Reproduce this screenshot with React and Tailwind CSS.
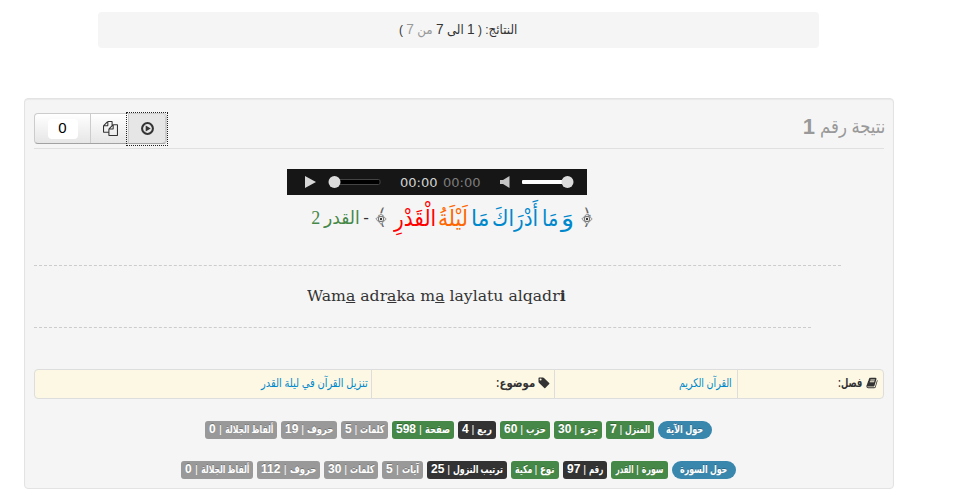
import { useLayoutEffect, useRef, useState } from "react";

// Squeezes a line of text horizontally so that it fills its box.
function Fit({ className = "", origin = "origin-right", children }) {
  const box = useRef(null);
  const text = useRef(null);
  const [scale, setScale] = useState(1);
  useLayoutEffect(() => {
    const w = text.current.offsetWidth;
    if (w) setScale(box.current.offsetWidth / w);
  }, []);
  return (
    <span ref={box} className={`inline-flex shrink-0 whitespace-nowrap ${className}`}>
      <span
        ref={text}
        className={`block shrink-0 ${origin}`}
        style={{ transform: `scaleX(${scale})` }}
      >
        {children}
      </span>
    </span>
  );
}

const GREEN = "bg-[#468847]";
const DARK = "bg-[#333333]";
const GRAY = "bg-[#999999]";

const ayaTags = [
  ["المنزل", "7", GREEN, "w-12", "w-[25px]"],
  ["جزء", "30", GREEN, "w-12", "w-[18px]"],
  ["حزب", "60", GREEN, "w-[50px]", "w-5"],
  ["ربع", "4", DARK, "w-[38px]", "w-[15px]"],
  ["صفحة", "598", GREEN, "w-[62px]", "w-[25px]"],
  ["كلمات", "5", GRAY, "w-[47px]", "w-6"],
  ["حروف", "19", GRAY, "w-14", "w-[26px]"],
  ["ألفاظ الجلالة", "0", GRAY, "w-[72px]", "w-12"],
];

const suraTags = [
  ["سورة", "القدر", GREEN, "w-[57px]", "w-[22px]", "w-[18px]"],
  ["رقم", "97", DARK, "w-11", "w-[14px]"],
  ["نوع", "مكية", GREEN, "w-12", "w-[15px]", "w-[17px]"],
  ["ترتيب النزول", "25", DARK, "w-20", "w-[50px]"],
  ["آيات", "5", GRAY, "w-[41px]", "w-[17px]"],
  ["كلمات", "30", GRAY, "w-[54px]", "w-6"],
  ["حروف", "112", GRAY, "w-[63px]", "w-[26px]"],
  ["ألفاظ الجلالة", "0", GRAY, "w-[72px]", "w-12"],
];

function Tags({ title, pill, titleWidth, tags, className }) {
  return (
    <div
      className={`flex h-[18px] gap-1 text-[11px] leading-[17px] font-bold text-white [text-shadow:0_-1px_0_rgba(0,0,0,0.25)] ${className}`}
    >
      <span className={`flex justify-center rounded-full bg-[#3a87ad] ${pill}`}>
        <Fit className={titleWidth}>{title}</Fit>
      </span>
      {tags.map(([name, value, colour, width, nameWidth, valueWidth]) => (
        <span key={name} className={`flex justify-between rounded-[3px] px-1 ${colour} ${width}`}>
          <Fit className={nameWidth}>{name}</Fit>
          <span className="font-normal">|</span>
          {valueWidth ? (
            <Fit className={valueWidth}>{value}</Fit>
          ) : (
            <span className="text-[12px]">{value}</span>
          )}
        </span>
      ))}
    </div>
  );
}

function CopyIcon() {
  return (
    <svg viewBox="0 0 1792 1792" className="size-[15px]" fill="#333">
      <path d="M1696 384q40 0 68 28t28 68v1216q0 40-28 68t-68 28h-960q-40 0-68-28t-28-68v-288h-544q-40 0-68-28t-28-68v-672q0-40 20-88t48-76l408-408q28-28 76-48t88-20h416q40 0 68 28t28 68v328q68-40 128-40h416zm-544 213l-299 299h299v-299zm-640-384l-299 299h299v-299zm196 647l316-316v-416h-384v416q0 40-28 68t-68 28h-416v640h512v-256q0-40 20-88t48-76zm956 804v-1152h-384v416q0 40-28 68t-68 28h-416v640h896z" />
    </svg>
  );
}

function PlayCircleIcon() {
  return (
    <svg viewBox="0 0 12 12" className="size-[13px]">
      <circle cx="6" cy="6" r="5" fill="none" stroke="#333" strokeWidth="1.9" />
      <path d="M4.3 3.2 9 6 4.3 8.800Z" fill="#333" />
    </svg>
  );
}

function BookIcon() {
  return (
    <svg viewBox="0 0 1792 1792" className="size-3" fill="#333">
      <path d="M1703 478q40 57 18 129l-275 906q-19 64-76.500 107.500t-122.500 43.500h-923q-77 0-148.500-53.500t-99.500-131.500q-24-67-2-127 0-4 3-27t4-37q1-8-3-21.500t-3-19.500q2-11 8-21t16.500-23.500 16.500-23.500q23-38 45-91.500t30-91.500q3-10 .5-30t-.5-28q3-11 17-28t17-23q21-36 42-92t25-90q1-9-2.500-32t.5-28q4-13 22-30.500t22-22.500q19-26 42.500-84.500t27.500-96.500q1-8-3-25.500t-2-26.500q2-8 9-18t18-23 17-21q8-12 16.500-30.500t15-35 16-36 19.500-32 26.500-23.500 36-11.500 47.500 5.500l-1 3q38-9 51-9h761q74 0 114 56t18 130l-274 906q-36 119-71.500 153.500t-128.500 34.500h-869q-27 0-38 15-11 16-1 43 24 70 144 70h923q29 0 56-15.500t35-41.500l300-987q7-22 5-57 38 15 59 43zm-1064 2q-4 13 2 22.500t20 9.500h608q13 0 25.500-9.500t16.500-22.500l21-64q4-13-2-22.500t-20-9.500h-608q-13 0-25.500 9.500t-16.500 22.500zm-83 256q-4 13 2 22.500t20 9.500h608q13 0 25.500-9.500t16.500-22.500l21-64q4-13-2-22.500t-20-9.500h-608q-13 0-25.500 9.500t-16.500 22.500z" />
    </svg>
  );
}

function TagIcon() {
  return (
    <svg viewBox="0 0 12 12" className="size-3" fill="#333">
      <path
        fillRule="evenodd"
        d="M1.200.5H5q.6 0 1 .4l5.200 5.200q.5.500 0 1l-3.900 4q-.5.500-1 0L.9 5.800Q.5 5.400.5 4.800V1.200q0-.7.7-.7ZM2.600 1.600a1 1 0 1 0 0 2 1 1 0 0 0 0-2Z"
      />
    </svg>
  );
}

// Ornate verse bracket: the bracket character with a rosette over its middle.
function VerseBracket({ children, className = "" }) {
  return (
    <span className={`relative flex w-3 justify-center ${className}`}>
      <Fit className="w-[11px] text-[22px] text-[#666]">{children}</Fit>
      <svg viewBox="0 0 12 12" className="absolute top-[17px] left-0 size-3">
        <path d="M6 .8 11.200 6 6 11.200.8 6Z" fill="#f5f5f5" stroke="#8a8a8a" strokeWidth="0.9" />
        <circle cx="6" cy="6" r="2.800" fill="none" stroke="#666" strokeWidth="1" />
        <circle cx="6" cy="6" r="1.200" fill="#333" />
      </svg>
    </span>
  );
}

function Player() {
  return (
    <div dir="ltr" className="flex h-[26px] w-[300px] items-center bg-[#161616] pl-[18px]">
      <svg viewBox="0 0 11 12" className="h-3 w-[11px]">
        <path d="M0 0 11 6 0 12Z" fill="#d8d8d8" />
      </svg>
      <svg viewBox="0 0 54 14" className="ml-3 h-3.5 w-[54px]">
        <rect x="2" y="4.500" width="50" height="5" rx="1.500" fill="#000" stroke="#444" />
        <circle cx="6.500" cy="7" r="6" fill="#dcdcdc" />
      </svg>
      <Fit
        origin="origin-left"
        className="mt-px ml-[18px] w-[38px] font-['DejaVu_Sans'] text-[12px] text-[#d2d2d2]"
      >
        00:00
      </Fit>
      <Fit
        origin="origin-left"
        className="mt-px ml-[5px] w-[38px] font-['DejaVu_Sans'] text-[12px] text-[#7c7c7c]"
      >
        00:00
      </Fit>
      <svg viewBox="0 0 10 12" className="ml-[19px] h-3 w-2.5">
        <path d="M0 4H3L9.500 0V12L3 8H0Z" fill="#c4c4c4" />
      </svg>
      <svg viewBox="0 0 54 14" className="ml-[11px] h-3.5 w-[54px]">
        <rect x="1" y="5" width="50" height="4" rx="1" fill="#fff" />
        <circle cx="46.500" cy="7" r="6" fill="#dcdcdc" />
      </svg>
    </div>
  );
}

function Buttons() {
  return (
    <div
      dir="ltr"
      className="flex h-[31px] w-[133px] rounded border border-[#cccccc] border-b-[#a2a2a2] bg-gradient-to-b from-white to-[#e6e6e6]"
    >
      <div className="flex w-14 shrink-0 items-center justify-center border-r border-[#cccccc]">
        <span className="flex h-5 w-[30px] items-center justify-center rounded bg-white text-[15px] text-black">
          0
        </span>
      </div>
      <div className="flex w-[35px] shrink-0 items-center justify-center pl-[3px]">
        <CopyIcon />
      </div>
      <div className="-mt-[2px] flex h-[34px] w-[42px] shrink-0 items-center justify-center border border-dotted border-[#222]">
        <div className="flex h-[30px] w-[38px] items-center justify-center rounded-r border-r border-b border-l border-[#cccccc] border-b-[#a2a2a2] bg-[#e6e6e6]">
          <PlayCircleIcon />
        </div>
      </div>
    </div>
  );
}

export default function App() {
  return (
    <div
      dir="rtl"
      className="h-[496px] w-[958px] overflow-hidden bg-white pt-3 font-['Liberation_Sans','DejaVu_Sans',sans-serif] text-[13px] text-[#333333]"
    >
      <div className="mr-[139px] flex h-9 w-[721px] items-center justify-center rounded bg-[#f5f5f5] pb-px">
        <Fit className="w-[118px]">
          النتائج: ( <span className="text-[15px]">1</span> الى <span className="text-[15px]">7</span>{" "}
          <span className="text-[#999999]">
            من <span className="text-[15px]">7</span>
          </span>{" "}
          )
        </Fit>
      </div>

      <div className="mt-[50px] mr-16 h-[391px] w-[870px] rounded border border-[#e3e3e3] bg-[#f5f5f5] px-[9px] shadow-[inset_0_1px_1px_rgba(0,0,0,0.05)]">
        <div className="flex h-[50px] items-start justify-between border-b border-[#e0e0e0] pt-3.5">
          <h3 className="-mr-px flex items-center gap-[5px] text-[#999999]">
            <Fit className="w-[65px] text-[19px] leading-[28px]">نتيجة رقم</Fit>
            <b className="text-[22px] leading-[28px]">1</b>
          </h3>
          <Buttons />
        </div>

        <div className="flex pt-5 pr-[297px]">
          <Player />
        </div>

        <div className="flex h-12 items-center pr-[291px] pb-0.5 text-[23px] leading-[44px]">
          <VerseBracket>﴿</VerseBracket>
          <Fit className="mr-[7px] w-[13px] text-[#0088cc]">وَ</Fit>
          <Fit className="mr-[3px] w-4 text-[#0088cc]">مَا</Fit>
          <Fit className="mr-1 w-[46px] text-[#0088cc]">أَدْرَاكَ</Fit>
          <Fit className="mr-[3px] w-[18px] text-[#0088cc]">مَا</Fit>
          <Fit className="mr-[3px] w-[30px] text-[#ff6600]">لَيْلَةُ</Fit>
          <Fit className="mr-[2px] w-[42px] text-[#ff0000]">الْقَدْرِ</Fit>
          <VerseBracket className="mr-[7px]">﴾</VerseBracket>
          <span className="mr-1.5 text-[17px]">-</span>
          <Fit className="mr-1 w-9 text-[18px] text-[#468847]">القدر</Fit>
          <span className="mr-[3px] font-['Liberation_Serif'] text-[18px] text-[#468847]">2</span>
        </div>

        <div className="mr-[43px] mt-[22px] border-t border-dashed border-[#cccccc]" />
        <div dir="ltr" className="flex h-[61px] items-center pb-px pl-[273px]">
          <Fit origin="origin-left" className="w-[259px] font-['DejaVu_Serif'] text-[15px]">
            Wam<u>a</u> adr<u>a</u>ka m<u>a</u> laylatu alqadr<b>i</b>
          </Fit>
        </div>
        <div className="mr-[73px] border-t border-dashed border-[#cccccc]" />

        <div className="mt-[41px] flex h-[30px] items-center rounded border border-[#dddddd] bg-[#fcf8e3] text-[12px]">
          <div className="flex h-full w-[146px] items-center gap-1 border-l border-[#dddddd] pr-[5px] pb-0.5 font-bold">
            <BookIcon />
            <Fit className="w-6">فصل:</Fit>
          </div>
          <div className="flex h-full w-[183px] items-center border-l border-[#dddddd] pr-[5px] pb-0.5 text-[#0088cc]">
            <Fit className="w-[53px]">القرآن الكريم</Fit>
          </div>
          <div className="flex h-full w-[183px] items-center gap-[3px] border-l border-[#dddddd] pr-1 pb-0.5 font-bold">
            <TagIcon />
            <Fit className="w-[39px]">موضوع:</Fit>
          </div>
          <div className="flex items-center pr-[3px] pb-0.5 text-[#0088cc]">
            <Fit className="w-[107px]">تنزيل القرآن في ليلة القدر</Fit>
          </div>
        </div>

        <Tags title="حول الآية" pill="w-[54px]" titleWidth="w-[37px]" tags={ayaTags} className="mt-[22px] pr-[172px]" />
        <Tags title="حول السورة" pill="w-16" titleWidth="w-[47px]" tags={suraTags} className="mt-[22px] pr-[148px]" />
      </div>
    </div>
  );
}
